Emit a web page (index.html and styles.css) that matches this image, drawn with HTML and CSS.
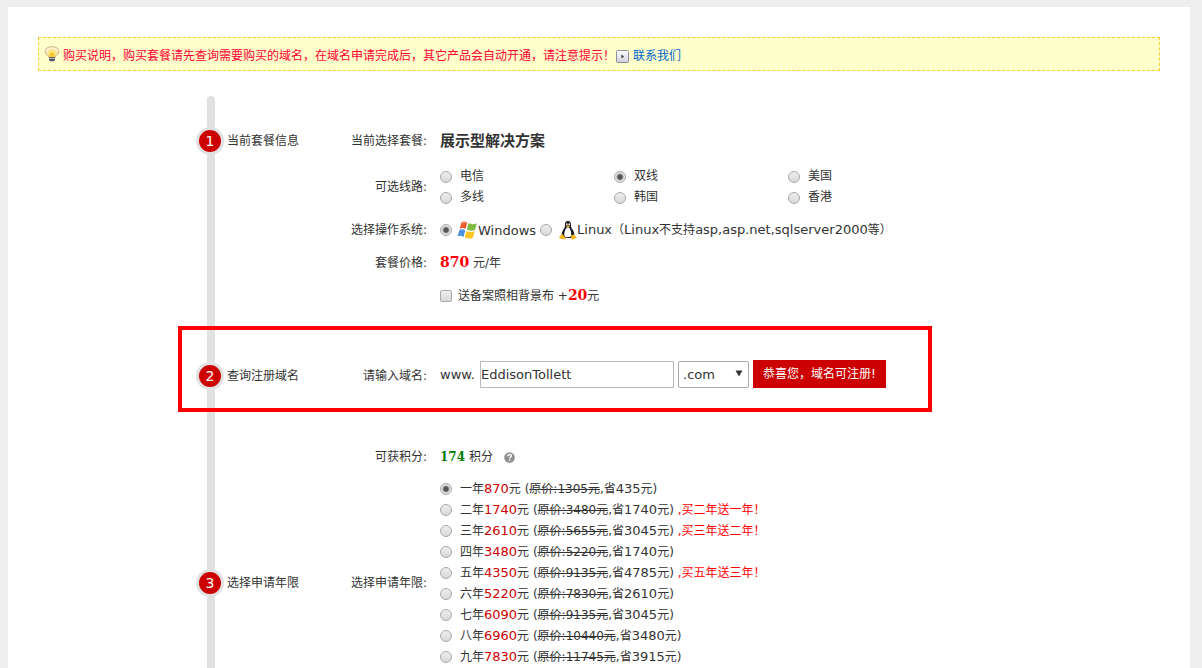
FILE: index.html
```html
<!DOCTYPE html>
<html lang="zh-CN">
<head>
<meta charset="utf-8">
<title>套餐购买</title>
<link rel="stylesheet" href="styles.css">
</head>
<body>
<main class="page">
  <div class="notice">
    <svg class="bulb" width="16" height="16" viewBox="0 0 16 16" aria-hidden="true">
      <defs><radialGradient id="glow" cx="50%" cy="60%" r="60%"><stop offset="0" stop-color="#ffd94a"/><stop offset=".55" stop-color="#fbe9a0"/><stop offset="1" stop-color="#fffaf0"/></radialGradient></defs>
      <path d="M8 .7C4 .7 1.200 2.600 1.200 5.400c0 2.400 2 3.700 3.600 4.600v1.500h6.400V10c1.600-.9 3.600-2.200 3.600-4.600C14.800 2.600 12 .7 8 .7z" fill="url(#glow)" stroke="#c9a877" stroke-width="1"/>
      <path d="M5.500 7h5v4h-5z" fill="#f7c62c"/>
      <path d="M5 11.300h6v2.800l-1 1.200H6l-1-1.200z" fill="#4f5460"/>
      <path d="M5 12.500h6" stroke="#c5c8ce" stroke-width=".8"/>
    </svg>
    <span class="notice-text">购买说明，购买套餐请先查询需要购买的域名，在域名申请完成后，其它产品会自动开通，请注意提示！</span>
    <a class="contact" href="#">
      <svg width="13" height="13" viewBox="0 0 13 13" aria-hidden="true">
        <defs><linearGradient id="key" x1="0" y1="0" x2="0" y2="1"><stop offset="0" stop-color="#fff"/><stop offset="1" stop-color="#cfd0dc"/></linearGradient></defs>
        <rect x=".5" y=".5" width="12" height="12" rx="1" fill="url(#key)" stroke="#8c8f9b"/>
        <path d="M5.500 4.500v4l2.500-2z" fill="#333"/>
      </svg>联系我们</a>
  </div>

  <form class="steps">
    <section class="step step-plan">
      <h2 class="step-title"><span class="badge">1</span>当前套餐信息</h2>
      <div class="label">当前选择套餐:</div>
      <div class="field"><strong class="plan">展示型解决方案</strong></div>

      <div class="label">可选线路:</div>
      <div class="field routes">
        <label class="option"><input type="radio" name="route">电信</label>
        <label class="option"><input type="radio" name="route" checked>双线</label>
        <label class="option"><input type="radio" name="route">美国</label>
        <label class="option"><input type="radio" name="route">多线</label>
        <label class="option"><input type="radio" name="route">韩国</label>
        <label class="option"><input type="radio" name="route">香港</label>
      </div>

      <div class="label">选择操作系统:</div>
      <div class="field systems">
        <label class="system"><input type="radio" name="os" checked>
          <svg width="21" height="20" viewBox="0 0 21 20" aria-hidden="true">
            <path d="M4.500 2.200C6.500 1 8.500 1.200 10.300 2.500L8.600 9C6.800 7.800 4.800 7.700 2.700 8.700z" fill="#ee5a2b"/>
            <path d="M11.500 3c2.400 1.500 5.400 1.500 8.300.2L18 9.900c-2.700 1.200-5.400 1.100-8.200-.4z" fill="#7fbc42"/>
            <path d="M2.400 9.900c2-1 4-.8 5.900.4L6.600 17C4.700 15.700 2.700 15.500.5 16.500z" fill="#4c93dc"/>
            <path d="M9.500 10.900c2.700 1.400 5.400 1.500 8.200.3l-1.800 6.500c-2.700 1.300-5.500 1.200-8.100-.4z" fill="#fcc51f"/>
            <path d="M5 3c1.500-.8 3-.7 4.400.1" stroke="#f9a58a" stroke-width="1" fill="none"/>
          </svg>Windows</label>
        <label class="system linux"><input type="radio" name="os">
          <svg width="18" height="20" viewBox="0 0 18 20" aria-hidden="true">
            <path d="M9 1C6.900 1 5.900 2.500 6 4.600c.1 2.200-.2 3-1.200 4.500-1.300 1.900-2.300 4.100-2 6.400L6 18h6l3.200-2.500c.4-2.500-.6-4.600-2-6.500-1-1.300-1.200-2.200-1.200-4.300C12 2.500 11.100 1 9 1z" fill="#16181c"/>
            <path d="M8.900 7.200c-1.600 0-2.100 1.500-2.700 3-.9 2-1.400 4.400-.5 6.300.9 1 5 1 6.200-.2.8-2.100.3-4.500-.5-6.300-.6-1.400-1-2.800-2.500-2.800z" fill="#fff"/>
            <ellipse cx="7.800" cy="4.400" rx=".8" ry="1.100" fill="#fff"/><ellipse cx="10.200" cy="4.400" rx=".8" ry="1.100" fill="#fff"/>
            <path d="M7 6.200l2-1 2 1-2 1.300z" fill="#f2b51d"/>
            <path d="M2.800 13.600l3.800 4.200c.2 1-.7 1.800-2 1.500L.8 18.500c-.8-.3-.3-1.300-.2-2 0-.8.700-1 1.300-1.100z" fill="#f5b81c"/>
            <path d="M12.200 14.700c1 .8 2 .4 2.900-.4l.6 1.500 1.700 1c.6.500 0 1-.7 1.400l-2.400 1.200c-1.200.5-2.100-.1-2.200-1.300z" fill="#f5b81c"/>
          </svg><span>Linux<span class="han">（</span>Linux<span class="han">不支持</span>asp,asp.net,sqlserver2000<span class="han">等）</span></span></label>
      </div>

      <div class="label">套餐价格:</div>
      <div class="field"><span><b class="amount red">870</b> 元/年</span></div>

      <div class="field backdrop">
        <label class="extra"><input type="checkbox"><span>送备案照相背景布 +<b class="amount red">20</b>元</span></label>
      </div>
    </section>

    <section class="step step-domain">
      <h2 class="step-title"><span class="badge">2</span>查询注册域名</h2>
      <label class="label" for="domain">请输入域名:</label>
      <div class="field domain">
        <span class="prefix">www.</span>
        <input class="domain-name" id="domain" type="text" value="EddisonTollett">
        <span class="suffix">
          <select aria-label="域名后缀"><option>.com</option></select>
          <svg width="8" height="7" viewBox="0 0 8 7" aria-hidden="true"><path d="M.5 .500h7L4 6.500z" fill="#333"/></svg>
        </span>
        <button class="check" type="button">恭喜您，域名可注册!</button>
      </div>
    </section>

    <section class="step step-years">
      <div class="label">可获积分:</div>
      <div class="field score"><span><b class="amount green">174</b> 积分</span>
        <svg width="11" height="11" viewBox="0 0 11 11" role="img" aria-label="帮助"><circle cx="5.500" cy="5.500" r="5.300" fill="#8f8f8f"/><path d="M3.700 4.300c0-1.200.8-1.800 1.900-1.800s1.800.6 1.800 1.500c0 1.100-1.700 1.200-1.700 2.400" fill="none" stroke="#fff" stroke-width="1.400"/><rect x="4.900" y="7.300" width="1.500" height="1.400" fill="#fff"/></svg>
      </div>

      <h2 class="step-title"><span class="badge">3</span>选择申请年限</h2>
      <div class="label">选择申请年限:</div>
      <div class="field years">
        <label class="option"><input type="radio" name="year" checked><span>一年<em>870</em>元 (<s>原价:1305元</s>,省<b class="saved">435</b>元)</span></label>
        <label class="option"><input type="radio" name="year"><span>二年<em>1740</em>元 (<s>原价:3480元</s>,省<b class="saved">1740</b>元) <i>,买二年送一年！</i></span></label>
        <label class="option"><input type="radio" name="year"><span>三年<em>2610</em>元 (<s>原价:5655元</s>,省<b class="saved">3045</b>元) <i>,买三年送二年！</i></span></label>
        <label class="option"><input type="radio" name="year"><span>四年<em>3480</em>元 (<s>原价:5220元</s>,省<b class="saved">1740</b>元)</span></label>
        <label class="option"><input type="radio" name="year"><span>五年<em>4350</em>元 (<s>原价:9135元</s>,省<b class="saved">4785</b>元) <i>,买五年送三年！</i></span></label>
        <label class="option"><input type="radio" name="year"><span>六年<em>5220</em>元 (<s>原价:7830元</s>,省<b class="saved">2610</b>元)</span></label>
        <label class="option"><input type="radio" name="year"><span>七年<em>6090</em>元 (<s>原价:9135元</s>,省<b class="saved">3045</b>元)</span></label>
        <label class="option"><input type="radio" name="year"><span>八年<em>6960</em>元 (<s>原价:10440元</s>,省<b class="saved">3480</b>元)</span></label>
        <label class="option"><input type="radio" name="year"><span>九年<em>7830</em>元 (<s>原价:11745元</s>,省<b class="saved">3915</b>元)</span></label>
      </div>
    </section>
  </form>
</main>
</body>
</html>
```

FILE: styles.css
```css
* {
  box-sizing: border-box;
}

body {
  margin: 0;
  padding: 7px 12px 0 8px;
  height: 100vh;
  overflow: hidden;
  background: #eee;
  color: #333;
  font: 12px/21px "DejaVu Sans", "Noto Sans CJK SC", sans-serif;
}

input,
select,
button {
  margin: 0;
  color: inherit;
  font: inherit;
}

svg {
  flex: none;
}

.page {
  min-height: 100%;
  padding: 30px;
  background: #fff;
}

.notice {
  display: flex;
  align-items: center;
  height: 34px;
  padding: 0 5px;
  border: 1px dashed #fc3;
  background: #ffc;
  white-space: nowrap;
}

.notice-text {
  margin: 4px 0 0 3px;
  color: #f03;
}

.contact {
  display: flex;
  align-items: center;
  gap: 4px;
  margin: 4px 0 0 1px;
  color: #06c;
  text-decoration: none;
}

/* Vertical progress rail with the three steps hanging off it */
.steps {
  position: relative;
  margin: 25px 0 0 158px;
}

.steps::before {
  content: "";
  position: absolute;
  top: 0;
  bottom: 0;
  left: 11px;
  width: 8px;
  border-radius: 4px;
  background: #e1e1e1;
}

.step {
  position: relative;
  display: grid;
  grid-template-columns: 112px 120px 1fr;
  row-gap: 10px;
  align-items: center;
  white-space: nowrap;
}

.step-title {
  grid-column: 1;
  display: flex;
  align-items: center;
  gap: 3px;
  margin: 0;
  font-size: 12px;
  font-weight: normal;
}

.badge {
  flex: none;
  width: 28px;
  height: 28px;
  border: 3px solid #e1e1e1;
  border-radius: 50%;
  background: #c00;
  color: #fff;
  font-size: 14px;
  line-height: 22px;
  text-align: center;
}

.label {
  grid-column: 2;
  padding-right: 1px;
  text-align: right;
}

.field {
  grid-column: 3;
  display: flex;
  align-items: center;
  padding-left: 12px;
}

.step-plan {
  grid-template-rows: 30px 42px 24px 22px 24px;
  padding-top: 30px;
}

.plan {
  font-size: 15px;
}

.routes {
  display: grid;
  grid-template-columns: repeat(3, 174px);
}

.option {
  display: flex;
  align-items: center;
  gap: 8px;
  height: 21px;
}

.system {
  display: flex;
  align-items: center;
  font-size: 13px;
}

.han {
  font-size: 12px;
}

.system svg {
  margin-left: 5px;
}

.linux {
  margin-left: 4px;
}

.linux svg {
  margin-left: 7px;
}

input[type="radio"],
input[type="checkbox"] {
  flex: none;
  appearance: none;
  width: 12px;
  height: 12px;
  border: 1px solid #aaa;
  border-radius: 50%;
  background: linear-gradient(#eee, #d8d8d8);
}

input[type="radio"]:checked {
  background: radial-gradient(circle, #555 0 2px, #e4e4e4 4px);
}

input[type="checkbox"] {
  border-radius: 2px;
}

.extra {
  display: flex;
  align-items: center;
  gap: 6px;
}

.amount {
  font-family: "DejaVu Serif", serif;
  font-size: 14px;
}

.red {
  color: #f00;
}

.green {
  color: green;
  font-size: 12px;
}

.step-domain {
  width: 754px;
  margin: 18px 0 0 -18px;
  padding: 28px 14px 18px;
  border: 4px solid #f00;
}

.step-domain .step-title,
.step-domain .label {
  padding-top: 4px;
}

.domain {
  gap: 4px;
  font-size: 13px;
}

.prefix {
  width: 36px;
}

.domain-name {
  width: 194px;
  height: 27px;
  padding: 0;
  border: 1px solid #bbb;
}

.suffix {
  position: relative;
  display: flex;
}

.suffix select {
  appearance: none;
  width: 71px;
  height: 27px;
  padding: 0 4px;
  border: 1px solid #aaa;
  border-radius: 2px;
  background: #fff;
}

.suffix svg {
  position: absolute;
  top: 9px;
  right: 6px;
  pointer-events: none;
}

.check {
  height: 28px;
  padding: 0 10px;
  border: 0;
  background: #c00;
  color: #fff;
  font-size: 12px;
}

.step-years {
  padding-top: 35px;
}

.score {
  gap: 7px;
}

.score svg {
  margin-left: 4px;
}

.years {
  flex-direction: column;
  align-items: flex-start;
  padding-bottom: 21px;
}

.years em {
  color: #c00;
  font-size: 13px;
  font-style: normal;
}

.years i {
  color: #f00;
  font-style: normal;
}

.saved {
  font-size: 13px;
  font-weight: normal;
}
```
